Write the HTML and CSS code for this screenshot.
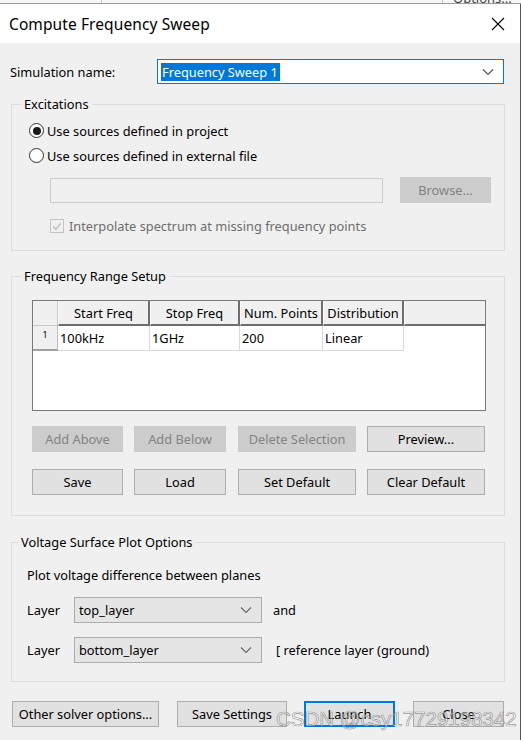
FILE: index.html
```html
<!DOCTYPE html>
<html>
<head>
<meta charset="utf-8">
<link rel="stylesheet" href="styles.css">
</head>
<body>
<div class="backdrop"><span class="bd-line l1"></span><span class="bd-line l2"></span><span class="bd-text">Options...</span></div>
<div class="dialog">
  <div class="titlebar">
    <span class="title">Compute Frequency Sweep</span>
    <svg class="close" width="14" height="14" viewBox="0 0 14 14"><path d="M1 1 L13 13 M13 1 L1 13" stroke="#000" stroke-width="1.1" fill="none"/></svg>
  </div>
  <div class="content">
    <div class="simrow">
      <span class="simlabel">Simulation name:</span>
      <div class="combo focus">
        <span class="sel">Frequency Sweep 1</span>
        <svg class="chev" width="12" height="8" viewBox="0 0 12 8"><path d="M1 1.5 L6 6.5 L11 1.5" stroke="#555" stroke-width="1.2" fill="none"/></svg>
      </div>
    </div>

    <fieldset class="group exc">
      <legend>Excitations</legend>
      <div class="gbody">
        <div class="radiorow"><span class="radio checked"></span><span>Use sources defined in project</span></div>
        <div class="radiorow"><span class="radio"></span><span>Use sources defined in external file</span></div>
        <div class="filerow">
          <div class="textfield"></div>
          <div class="btn disabled browse">Browse...</div>
        </div>
        <div class="checkrow">
          <span class="check"><svg width="13" height="13" viewBox="0 0 13 13"><path d="M2.5 6.5 L5.2 9.5 L10.5 3" stroke="#b8b8b8" stroke-width="1.3" fill="none"/></svg></span>
          <span class="graytext">Interpolate spectrum at missing frequency points</span>
        </div>
      </div>
    </fieldset>

    <fieldset class="group freq">
      <legend>Frequency Range Setup</legend>
      <div class="gbody">
        <div class="table">
          <div class="hc corner"></div>
          <div class="hc">Start Freq</div>
          <div class="hc">Stop Freq</div>
          <div class="hc">Num. Points</div>
          <div class="hc">Distribution</div>
          <div class="hc last"></div>
          <div class="rh">1</div>
          <div class="dc">100kHz</div>
          <div class="dc">1GHz</div>
          <div class="dc">200</div>
          <div class="dc">Linear</div>
          <div class="dc empty"></div>
        </div>
        <div class="btnrow first">
          <div class="btn disabled w1">Add Above</div>
          <div class="btn disabled w2">Add Below</div>
          <div class="btn disabled w3">Delete Selection</div>
          <div class="btn w4">Preview...</div>
        </div>
        <div class="btnrow">
          <div class="btn w1">Save</div>
          <div class="btn w2">Load</div>
          <div class="btn w3">Set Default</div>
          <div class="btn w4">Clear Default</div>
        </div>
      </div>
    </fieldset>

    <fieldset class="group volt">
      <legend>Voltage Surface Plot Options</legend>
      <div class="gbody">
        <div class="plottext">Plot voltage difference between planes</div>
        <div class="layerrow">
          <span class="layerlabel">Layer</span>
          <div class="combo gray"><span>top_layer</span><svg class="chev" width="12" height="8" viewBox="0 0 12 8"><path d="M1 1.5 L6 6.5 L11 1.5" stroke="#666" stroke-width="1.1" fill="none"/></svg></div>
          <span class="after and">and</span>
        </div>
        <div class="layerrow">
          <span class="layerlabel">Layer</span>
          <div class="combo gray"><span>bottom_layer</span><svg class="chev" width="12" height="8" viewBox="0 0 12 8"><path d="M1 1.5 L6 6.5 L11 1.5" stroke="#666" stroke-width="1.1" fill="none"/></svg></div>
          <span class="after ref">[ reference layer (ground)</span>
        </div>
      </div>
    </fieldset>

    <div class="bottomrow">
      <div class="btn b1">Other solver options...</div>
      <div class="btn b2">Save Settings</div>
      <div class="btn b3 default">Launch</div>
      <div class="btn b4">Close</div>
    </div>
  </div>
  <div class="watermark">CSDN @csy17729198342</div>
</div>
</body>
</html>
```

FILE: styles.css
```css
* { box-sizing: border-box; }
html, body { margin: 0; padding: 0; }
body {
  width: 521px;
  height: 740px;
  overflow: hidden;
  background: #f0f0f0;
  font-family: "Noto Sans", "Open Sans", sans-serif;
  font-size: 12.8px;
  color: #000;
}
.backdrop {
  height: 4px;
  background: #f7f7f7;
  border-bottom: 1px solid #9a9a9a;
  position: relative;
  overflow: hidden;
}
.bd-line { position: absolute; top: 0; width: 1px; height: 4px; background: #c8c8c8; }
.l1 { left: 101px; }
.l2 { left: 442px; }
.bd-text { position: absolute; left: 453px; top: -11px; font-size: 13px; color: #444; }
.dialog {
  position: relative;
  width: 521px;
  height: 736px;
  border-right: 1px solid #555;
  background: #f0f0f0;
}
.titlebar {
  height: 39px;
  background: #fff;
  display: flex;
  align-items: center;
  justify-content: space-between;
  padding: 0 15px 0 9px;
}
.title { font-size: 15.5px; letter-spacing: 0.1px; }
.close { margin-top: 1px; }
.content { padding: 16px 0 0 0; }

.simrow { display: flex; align-items: center; height: 25px; }
.simlabel { width: 157px; padding-left: 10px; }
.combo {
  display: flex;
  align-items: center;
  justify-content: space-between;
  height: 25px;
  border: 1px solid #7a7a7a;
  background: #fff;
}
.combo.focus { width: 347px; border-color: #0078d7; padding: 0 9px 0 3px; }
.sel { background: #0078d7; color: #fff; padding: 0 2px 0 1px; line-height: 18px; }

.group {
  margin: 0 15px 0 11px;
  border: 1px solid #dcdcdc;
  padding: 0;
  min-width: 0;
}
.group legend {
  margin-left: 9px;
  padding: 0 3px;
  line-height: 18px;
  height: 18px;
}
.exc { margin-top: 11px; height: 156px; }
.exc .gbody { padding: 5px 0 0 16px; }
.radiorow { display: flex; align-items: center; height: 25px; gap: 3px; }
.radio {
  width: 15px; height: 15px; border-radius: 50%;
  border: 1px solid #333; background: #fff;
  display: inline-flex; align-items: center; justify-content: center;
  margin-left: 1px;
}
.radio.checked::after {
  content: ""; width: 8px; height: 8px; border-radius: 50%; background: #1a1a1a;
}
.filerow { display: flex; align-items: center; margin-top: 9px; padding-left: 22px; height: 26px; }
.textfield { width: 333px; height: 25px; border: 1px solid #cccccc; background: #f0f0f0; }
.browse { width: 91px; margin-left: 17px; }
.checkrow { display: flex; align-items: center; height: 24px; margin-top: 11px; padding-left: 22px; gap: 5px; }
.check { width: 14px; height: 14px; border: 1px solid #c4c4c4; display: inline-flex; align-items: center; justify-content: center; }
.check svg { display: block; }
.graytext { color: #6d6d6d; }

.btn {
  display: flex; align-items: center; justify-content: center;
  height: 26px;
  border: 1px solid #adadad;
  background: #e1e1e1;
  white-space: nowrap;
}
.btn.disabled { background: #cccccc; border-color: #cccccc; color: #838383; }

.freq { margin-top: 16px; height: 249px; }
.freq .gbody { padding: 15px 0 0 20px; }
.table {
  width: 454px; height: 111px;
  border: 1px solid #7a7a7a;
  background: #fff;
  display: grid;
  grid-template-columns: 25px 92px 90px 83px 81px 1fr;
  grid-template-rows: 25px 25px;
  align-content: start;
}
.hc {
  background: #f0f0f0;
  border-right: 2px solid #6e6e6e;
  border-bottom: 2px solid #6e6e6e;
  border-left: 1px solid #fafafa;
  display: flex; align-items: center; justify-content: center;
  white-space: nowrap;
}
.hc.corner { border-right: 1px solid #c8c8c8; border-bottom: 1px solid #c8c8c8; border-left: none; }
.hc.last { border-right: none; }
.rh {
  background: #f0f0f0;
  border-right: 1px solid #bdbdbd;
  border-bottom: 2px solid #a0a0a0;
  font-size: 9px;
  display: flex; justify-content: center; align-items: flex-start; padding-top: 2px;
}
.dc {
  border-right: 1px solid #d8d8d8;
  border-bottom: 1px solid #d8d8d8;
  display: flex; align-items: center; padding-left: 2px;
}
.dc.empty { border: none; }
.btnrow { display: flex; margin-top: 17px; }
.btnrow.first { margin-top: 15px; }
.w1 { width: 91px; }
.w2 { width: 92px; margin-left: 11px; }
.w3 { width: 118px; margin-left: 12px; }
.w4 { width: 118px; margin-left: 11px; }

.volt { margin-top: 17px; height: 149px; }
.volt legend { margin-left: 6px; }
.volt .gbody { padding: 14px 0 0 15px; }
.plottext { height: 20px; line-height: 20px; }
.layerrow { display: flex; align-items: center; margin-top: 12px; height: 25px; }
.layerrow + .layerrow { margin-top: 15px; }
.layerlabel { width: 47px; }
.combo.gray {
  width: 188px; height: 26px;
  background: #e5e5e5; border-color: #adadad;
  padding: 0 9px 0 4px;
}
.after { margin-left: 11px; }
.after.ref { margin-left: 14px; }

.bottomrow { display: flex; margin-top: 19px; padding-left: 12px; }
.b1 { width: 147px; }
.b2 { width: 110px; margin-left: 18px; }
.b3 { width: 91px; margin-left: 17px; }
.b4 { width: 91px; margin-left: 18px; }
.btn.default { border: 2px solid #0078d7; }

.watermark {
  position: absolute;
  left: 276px; top: 703px;
  font-family: "Liberation Sans", Arial, sans-serif;
  font-size: 20.5px;
  color: rgba(255,255,255,0.5);
  -webkit-text-stroke: 0.7px rgba(90,90,90,0.6);
  white-space: nowrap;
}
```
